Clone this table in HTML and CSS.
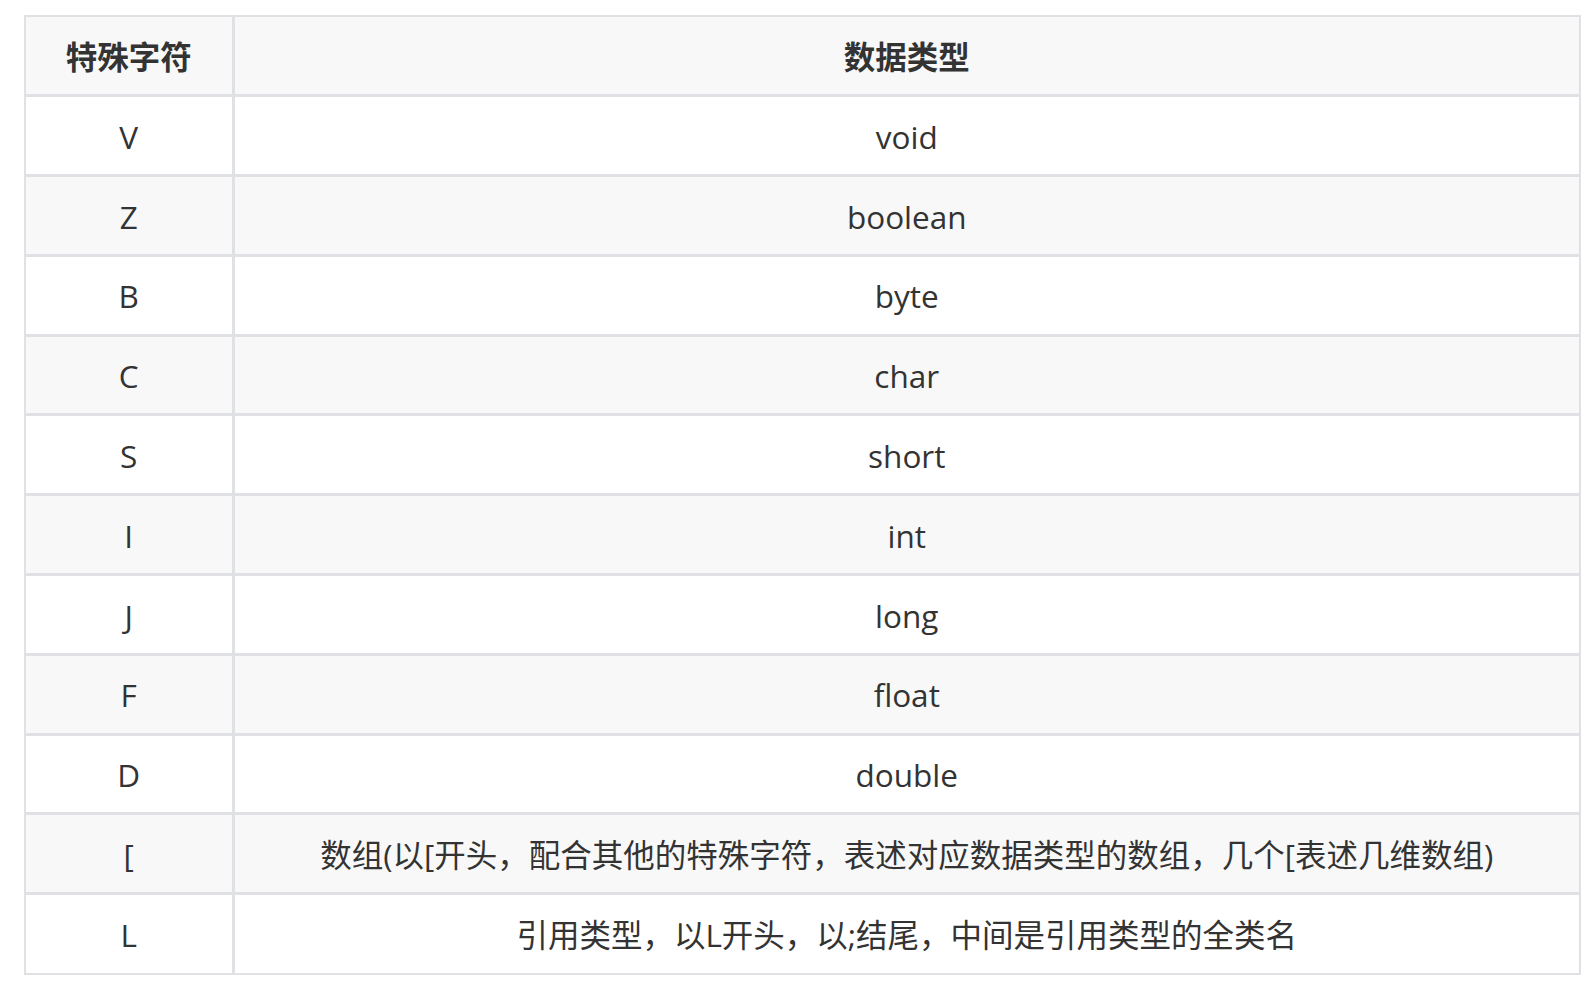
FILE: index.html
```html
<!DOCTYPE html>
<html lang="zh">
<head>
<meta charset="utf-8">
<link rel="stylesheet" href="styles.css">
</head>
<body>
<table class="sig-table">
  <colgroup>
    <col class="col-char">
    <col class="col-type">
  </colgroup>
  <thead>
    <tr><th>特殊字符</th><th>数据类型</th></tr>
  </thead>
  <tbody>
    <tr><td>V</td><td>void</td></tr>
    <tr><td>Z</td><td>boolean</td></tr>
    <tr><td>B</td><td>byte</td></tr>
    <tr><td>C</td><td>char</td></tr>
    <tr><td>S</td><td>short</td></tr>
    <tr><td>I</td><td>int</td></tr>
    <tr><td>J</td><td>long</td></tr>
    <tr><td>F</td><td>float</td></tr>
    <tr><td>D</td><td>double</td></tr>
    <tr><td>[</td><td>数组(以[开头，配合其他的特殊字符，表述对应数据类型的数组，几个[表述几维数组)</td></tr>
    <tr><td>L</td><td>引用类型，以L开头，以;结尾，中间是引用类型的全类名</td></tr>
  </tbody>
</table>
</body>
</html>
```

FILE: styles.css
```css
html, body {
  margin: 0;
  padding: 0;
  background: #ffffff;
}

body {
  padding: 15px 0 0 24px;
  font-family: "Open Sans", "Noto Sans CJK SC", sans-serif;
  color: #333333;
}

.sig-table {
  border-collapse: collapse;
  table-layout: fixed;
  width: 1557px;
  font-size: 31.5px;
}

.col-char {
  width: 208px;
}

.sig-table th,
.sig-table td {
  border: 3px solid #dfe1e5;
  text-align: center;
  vertical-align: middle;
  height: 79.8px;
  padding: 2px 20px 0;
  box-sizing: border-box;
  line-height: 1.2;
  white-space: nowrap;
}

.sig-table tr > :first-child {
  border-left-width: 2px;
}

.sig-table tr > :last-child {
  border-right-width: 2px;
}

.sig-table thead th {
  border-top-width: 2px;
}

.sig-table tbody tr:last-child td {
  border-bottom-width: 2px;
}

.sig-table th {
  font-weight: 700;
  color: #333333;
  background: #f8f8f8;
}

.sig-table tbody tr {
  background: #ffffff;
}

.sig-table tbody tr:nth-child(even) {
  background: #f8f8f8;
}
```
